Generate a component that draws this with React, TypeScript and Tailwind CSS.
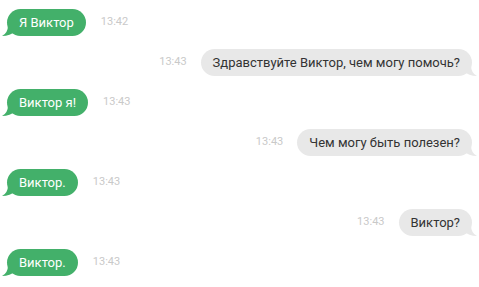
type Msg = { text: string; time: string; mine: boolean };

const messages: Msg[] = [
  { text: "Я Виктор", time: "13:42", mine: false },
  { text: "Здравствуйте Виктор, чем могу помочь?", time: "13:43", mine: true },
  { text: "Виктор я!", time: "13:43", mine: false },
  { text: "Чем могу быть полезен?", time: "13:43", mine: true },
  { text: "Виктор.", time: "13:43", mine: false },
  { text: "Виктор?", time: "13:43", mine: true },
  { text: "Виктор.", time: "13:43", mine: false },
];

function Tail({ side, color }: { side: "left" | "right"; color: string }) {
  if (side === "left") {
    return (
      <svg className="absolute -left-[5px] bottom-0" width="14" height="11" viewBox="0 0 14 11">
        <path d="M6 0 Q6 8 0 11 Q8 11 14 6 L14 0 Z" fill={color} />
      </svg>
    );
  }
  return (
    <svg className="absolute -right-[5px] bottom-0" width="14" height="11" viewBox="0 0 14 11">
      <path d="M8 0 Q8 8 14 11 Q6 11 0 6 L0 0 Z" fill={color} />
    </svg>
  );
}

function Row({ m }: { m: Msg }) {
  if (m.mine) {
    return (
      <div className="flex items-center justify-end h-[27px]">
        <span className="text-[11px] text-[#c9c9c9] mr-[14px]">{m.time}</span>
        <div className="relative">
          <Tail side="right" color="#e8e8e8" />
          <div className="relative bg-[#e8e8e8] text-[#333] text-[13px] h-[27px] leading-[27px] px-[12px] rounded-[14px]">
            {m.text}
          </div>
        </div>
      </div>
    );
  }
  return (
    <div className="flex items-center h-[27px]">
      <div className="relative">
        <Tail side="left" color="#43b06a" />
        <div className="relative bg-[#43b06a] text-white text-[13px] h-[27px] leading-[27px] px-[12px] rounded-[14px]">
          {m.text}
        </div>
      </div>
      <span className="text-[11px] text-[#c9c9c9] ml-[15px]">{m.time}</span>
    </div>
  );
}

export default function App() {
  return (
    <div className="w-[479px] h-[287px] bg-white px-[7px] pt-[9px] flex flex-col gap-[13px] font-['Roboto',sans-serif] overflow-hidden">
      {messages.map((m, i) => (
        <Row key={i} m={m} />
      ))}
    </div>
  );
}
